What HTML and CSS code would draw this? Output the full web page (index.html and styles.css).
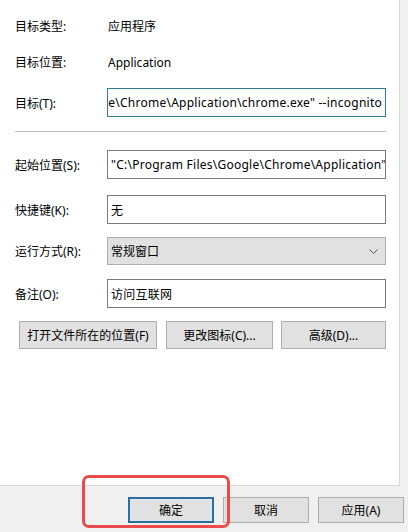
FILE: index.html
```html
<!DOCTYPE html>
<html lang="zh-CN">
<head>
  <meta charset="UTF-8">
  <title>快捷方式属性</title>
  <link rel="stylesheet" href="styles.css">
</head>
<body>
  <div class="dialog">
    <div class="panel">
      <div class="row r1">
        <span class="label">目标类型:</span>
        <span class="value">应用程序</span>
      </div>
      <div class="row r2">
        <span class="label">目标位置:</span>
        <span class="value">Application</span>
      </div>
      <div class="row r3">
        <label class="label">目标(T):</label>
        <div class="field focus tail"><span>e\Chrome\Application\chrome.exe" --incognito</span></div>
      </div>

      <div class="sep"></div>

      <div class="row r4">
        <label class="label">起始位置(S):</label>
        <div class="field"><span>"C:\Program Files\Google\Chrome\Application"</span></div>
      </div>
      <div class="row r5">
        <label class="label">快捷键(K):</label>
        <div class="field"><span>无</span></div>
      </div>
      <div class="row r6">
        <label class="label">运行方式(R):</label>
        <div class="field select">
          <span>常规窗口</span>
          <svg class="chevron" width="9" height="5" viewBox="0 0 9 5"><polyline points="0.5,0.5 4.5,4.5 8.5,0.5" fill="none" stroke="#555" stroke-width="1"/></svg>
        </div>
      </div>
      <div class="row r7">
        <label class="label">备注(O):</label>
        <div class="field"><span>访问互联网</span></div>
      </div>

      <div class="actions">
        <button class="btn open">打开文件所在的位置(F)</button>
        <button class="btn icon">更改图标(C)...</button>
        <button class="btn adv">高级(D)...</button>
      </div>
    </div>

    <div class="footer">
      <button class="btn foot default">确定</button>
      <button class="btn foot">取消</button>
      <button class="btn foot">应用(A)</button>
    </div>

    <div class="mark"></div>
  </div>
</body>
</html>
```

FILE: styles.css
```css
body {
  margin: 0;
  background: #f0f0f0;
  font-family: "Segoe UI", "Noto Sans", "Noto Sans CJK SC", sans-serif;
  font-size: 12px;
  color: #000;
}

.dialog {
  position: relative;
  width: 408px;
  height: 532px;
  overflow: hidden;
}

.panel {
  width: 386px;
  height: 473px;
  padding: 12px 13px 0 0;
  background: #fff;
  border-right: 1px solid #d9d9d9;
  border-bottom: 1px solid #d9d9d9;
}

.row {
  display: flex;
  align-items: center;
  padding-left: 15px;
  height: 29px;
}

.r1 { height: 28px; }
.r2 { height: 28px; margin-top: 8px; }
.r3 { margin-top: 12px; }
.r4 { margin-top: 18px; }
.r5 { margin-top: 16px; }
.r6 { height: 28px; margin-top: 13px; }
.r7 { margin-top: 14px; }

.label {
  width: 92px;
  flex-shrink: 0;
}

.value {
  padding-left: 1px;
}

.field {
  box-sizing: border-box;
  width: 279px;
  height: 100%;
  border: 1px solid #7a7a7a;
  background: #fff;
  display: flex;
  align-items: center;
  padding: 0 3px;
  overflow: hidden;
  white-space: nowrap;
  letter-spacing: 0.25px;
}

.field span {
  flex-shrink: 0;
}

.field.focus {
  border-color: #2f7f96;
}

.field.tail {
  justify-content: flex-end;
}

.field.select {
  background: #e1e1e1;
  border-color: #adadad;
  justify-content: space-between;
  padding-right: 7px;
  letter-spacing: 0;
}

.chevron {
  display: block;
}

.sep {
  margin: 14px 0 0 15px;
  width: 371px;
  height: 1px;
  background: #b9b9b9;
}

.actions {
  display: flex;
  margin-top: 13px;
  padding-left: 19px;
  height: 28px;
}

.btn {
  box-sizing: border-box;
  height: 28px;
  border: 1px solid #adadad;
  background: #e1e1e1;
  font: inherit;
  color: #000;
  padding: 0;
}

.btn.open { width: 138px; }
.btn.icon { width: 107px; margin-left: 9px; }
.btn.adv { width: 105px; margin-left: 8px; }

.footer {
  display: flex;
  gap: 9px;
  padding: 11px 0 0 128px;
}

.btn.foot {
  width: 86px;
  height: 26px;
}

.btn.default {
  border: 2px solid #2d6d9b;
  box-shadow: inset 0 0 0 1px #d6ebf8;
}

.mark {
  position: absolute;
  left: 82px;
  top: 475px;
  width: 142px;
  height: 47px;
  border: 3px solid #ea4b4b;
  border-radius: 7px;
}
```
